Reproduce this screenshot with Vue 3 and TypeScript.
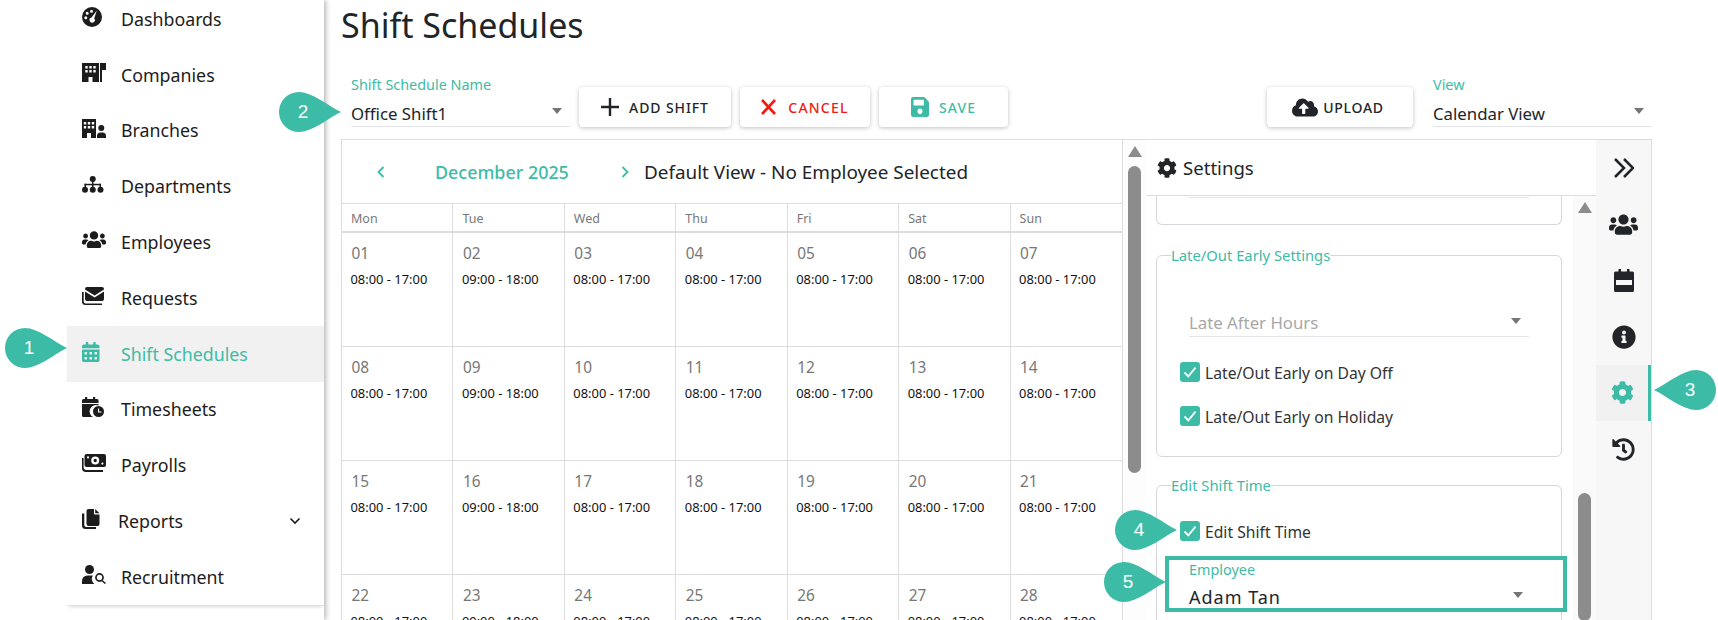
<script setup lang="ts">
interface Icon {
  vb: string
  w: number
  h: number
  paths: string[]
}

const dot = (cx: number, cy: number, r: number) =>
  `M${cx - r} ${cy}a${r} ${r} 0 1 0 ${2 * r} 0a${r} ${r} 0 1 0 ${-2 * r} 0z`
const box = (x: number, y: number, w: number, h: number) => `M${x} ${y}h${w}v${h}h${-w}z`

const usersPath = 'M96 224c35.3 0 64-28.7 64-64s-28.7-64-64-64-64 28.7-64 64 28.7 64 64 64zm448 0c35.3 0 64-28.7 64-64s-28.7-64-64-64-64 28.7-64 64 28.7 64 64 64zm32 32h-64c-17.6 0-33.5 7.1-45.1 18.6 40.3 22.1 68.9 62 75.1 109.4h66c17.7 0 32-14.3 32-32v-32c0-35.3-28.7-64-64-64zm-256 0c61.9 0 112-50.1 112-112S381.9 32 320 32 208 82.1 208 144s50.1 112 112 112zm76.8 32h-8.3c-20.8 10-43.9 16-68.5 16s-47.6-6-68.5-16h-8.3C179.6 288 128 339.6 128 403.2V432c0 26.5 21.5 48 48 48h288c26.5 0 48-21.5 48-48v-28.8c0-63.6-51.6-115.2-115.2-115.2zm-223.7-13.4C161.5 263.1 145.6 256 128 256H64c-35.3 0-64 28.7-64 64v32c0 17.7 14.3 32 32 32h65.9c6.3-47.4 34.9-87.3 75.2-109.4z'
const calendarAltPath = 'M0 464c0 26.5 21.5 48 48 48h352c26.5 0 48-21.5 48-48V192H0v272zm320-196c0-6.6 5.4-12 12-12h40c6.6 0 12 5.4 12 12v40c0 6.6-5.4 12-12 12h-40c-6.6 0-12-5.4-12-12v-40zm0 128c0-6.6 5.4-12 12-12h40c6.6 0 12 5.4 12 12v40c0 6.6-5.4 12-12 12h-40c-6.6 0-12-5.4-12-12v-40zM192 268c0-6.6 5.4-12 12-12h40c6.6 0 12 5.4 12 12v40c0 6.6-5.4 12-12 12h-40c-6.6 0-12-5.4-12-12v-40zm0 128c0-6.6 5.4-12 12-12h40c6.6 0 12 5.4 12 12v40c0 6.6-5.4 12-12 12h-40c-6.6 0-12-5.4-12-12v-40zM64 268c0-6.6 5.4-12 12-12h40c6.6 0 12 5.4 12 12v40c0 6.6-5.4 12-12 12H76c-6.6 0-12-5.4-12-12v-40zm0 128c0-6.6 5.4-12 12-12h40c6.6 0 12 5.4 12 12v40c0 6.6-5.4 12-12 12H76c-6.6 0-12-5.4-12-12v-40zM400 64h-48V16c0-8.8-7.2-16-16-16h-32c-8.8 0-16 7.2-16 16v48H160V16c0-8.8-7.2-16-16-16h-32c-8.8 0-16 7.2-16 16v48H48C21.5 64 0 85.5 0 112v48h448v-48c0-26.5-21.5-48-48-48z'
const cogPath = 'M487.4 315.7l-42.6-24.6c4.3-23.2 4.3-47 0-70.2l42.6-24.6c4.9-2.8 7.1-8.6 5.5-14-11.1-35.6-30-67.8-54.7-94.6-3.8-4.1-10-5.1-14.8-2.3L380.8 110c-17.9-15.4-38.5-27.3-60.8-35.1V25.8c0-5.6-3.9-10.5-9.4-11.7-36.7-8.2-74.3-7.8-109.2 0-5.5 1.2-9.4 6.1-9.4 11.7V75c-22.2 7.9-42.8 19.8-60.8 35.1L88.7 85.5c-4.9-2.8-11-1.9-14.8 2.3-24.7 26.7-43.6 58.9-54.7 94.6-1.7 5.4.6 11.2 5.5 14L67.3 221c-4.3 23.2-4.3 47 0 70.2l-42.6 24.6c-4.9 2.8-7.1 8.6-5.5 14 11.1 35.6 30 67.8 54.7 94.6 3.8 4.1 10 5.1 14.8 2.3l42.6-24.6c17.9 15.4 38.5 27.3 60.8 35.1v49.2c0 5.6 3.9 10.5 9.4 11.7 36.7 8.2 74.3 7.8 109.2 0 5.5-1.2 9.4-6.1 9.4-11.7v-49.2c22.2-7.9 42.8-19.8 60.8-35.1l42.6 24.6c4.9 2.8 11 1.9 14.8-2.3 24.7-26.7 43.6-58.9 54.7-94.6 1.5-5.5-.7-11.3-5.6-14.1zM256 336c-44.1 0-80-35.9-80-80s35.9-80 80-80 80 35.9 80 80-35.9 80-80 80z'
const savePath = 'M433.941 129.941l-83.882-83.882A48 48 0 0 0 316.118 32H48C21.49 32 0 53.49 0 80v352c0 26.51 21.49 48 48 48h352c26.51 0 48-21.49 48-48V163.882a48 48 0 0 0-14.059-33.941zM224 416c-35.346 0-64-28.654-64-64 0-35.346 28.654-64 64-64s64 28.654 64 64c0 35.346-28.654 64-64 64zm96-304.52V212c0 6.627-5.373 12-12 12H76c-6.627 0-12-5.373-12-12V108c0-6.627 5.373-12 12-12h228.52c3.183 0 6.235 1.264 8.485 3.515l3.48 3.48A11.996 11.996 0 0 1 320 111.48z'
const cloudPath = 'M537.6 226.6c4.1-10.7 6.4-22.4 6.4-34.6 0-53-43-96-96-96-19.7 0-38.1 6-53.3 16.2C367 64.2 315.3 32 256 32c-88.4 0-160 71.6-160 160 0 2.7.1 5.4.2 8.1C40.2 219.8 0 273.2 0 336c0 79.5 64.5 144 144 144h368c70.7 0 128-57.3 128-128 0-61.9-44-113.6-102.4-125.4zM393.4 288H328v112c0 8.8-7.2 16-16 16h-48c-8.8 0-16-7.2-16-16V288h-65.4c-14.3 0-21.4-17.2-11.3-27.3l105.4-105.4c6.2-6.2 16.4-6.2 22.6 0l105.4 105.4c10.1 10.1 2.9 27.3-11.3 27.3z'
const infoPath = 'M256 8C119.043 8 8 119.083 8 256c0 136.997 111.043 248 248 248s248-111.003 248-248C504 119.083 392.957 8 256 8zm0 110c23.196 0 42 18.804 42 42s-18.804 42-42 42-42-18.804-42-42 18.804-42 42-42zm56 254c0 6.627-5.373 12-12 12h-88c-6.627 0-12-5.373-12-12v-24c0-6.627 5.373-12 12-12h12v-64h-12c-6.627 0-12-5.373-12-12v-24c0-6.627 5.373-12 12-12h64c6.627 0 12 5.373 12 12v100h12c6.627 0 12 5.373 12 12v24z'
const historyPath = 'M504 255.531c.253 136.64-111.18 248.372-247.82 248.468-59.015.042-113.223-20.53-155.822-54.911-11.077-8.94-11.905-25.541-1.839-35.607l11.267-11.267c8.609-8.609 22.353-9.551 31.891-1.984C173.062 425.135 212.781 440 256 440c101.705 0 184-82.311 184-184 0-101.705-82.311-184-184-184-48.814 0-93.149 18.969-126.068 49.932l50.754 50.754c10.08 10.08 2.941 27.314-11.313 27.314H24c-8.837 0-16-7.163-16-16V38.627c0-14.254 17.234-21.393 27.314-11.314l49.372 49.372C129.209 31.084 189.552 8 256 8c136.81 0 247.747 110.78 248 247.531zm-180.912 78.784l9.823-12.63c8.138-10.463 6.253-25.542-4.21-33.679L288 256.349V152c0-13.255-10.745-24-24-24h-16c-13.255 0-24 10.745-24 24v135.651l65.409 50.874c10.463 8.137 25.541 6.253 33.679-4.21z'

const windows = (x: number) =>
  [3, 7].map((y) => [0, 4, 8].map((dx) => box(x + dx, y, 2.4, 2.4)).join('')).join('')

const navItems: { label: string; icon: Icon; active?: boolean; sub?: boolean }[] = [
  {
    label: 'Dashboards',
    icon: {
      vb: '0 0 20 20', w: 20, h: 20,
      paths: [dot(10, 10, 10) + dot(9.5, 4.2, 1.5) + dot(5.2, 6.2, 1.5) + dot(3.8, 10.8, 1.5) + 'M14.8 3.4L12.2 11.4a2.6 2.6 0 1 1-2.7-.9z'],
    },
  },
  {
    label: 'Companies',
    icon: {
      vb: '0 0 24 19', w: 24, h: 19,
      paths: [box(0, 0, 17, 19) + windows(3.3) + box(6.5, 14, 4, 5), box(18, 0, 2, 19), box(20, 0, 4, 7)],
    },
  },
  {
    label: 'Branches',
    icon: {
      vb: '0 0 24 19', w: 24, h: 19,
      paths: [box(0, 0, 14, 19) + windows(1.8) + box(5, 14, 4, 5), dot(19.3, 9, 3), 'M15 19v-2a3.5 3.5 0 0 1 3.5-3.5h2A3.5 3.5 0 0 1 24 17v2z'],
    },
  },
  {
    label: 'Departments',
    icon: {
      vb: '0 0 21.5 17', w: 21.5, h: 17,
      paths: [dot(10.75, 3, 3), box(10, 5, 1.5, 7), box(2.5, 7.8, 16.5, 1.5), box(2.5, 7.8, 1.5, 4), box(17.5, 7.8, 1.5, 4), dot(3, 13.8, 3), dot(10.75, 13.8, 3), dot(18.5, 13.8, 3)],
    },
  },
  { label: 'Employees', icon: { vb: '0 0 640 512', w: 24, h: 19.2, paths: [usersPath] } },
  {
    label: 'Requests',
    icon: {
      vb: '0 0 22 18', w: 22, h: 18,
      paths: [
        'M5 0h15a2 2 0 0 1 2 2v.6L12.6 8.4 3 2.6V2a2 2 0 0 1 2-2z',
        'M3 4.6l9.6 5.8L22 4.6V12a2 2 0 0 1-2 2H5a2 2 0 0 1-2-2z',
        'M0 5h1.7v9.6a1.9 1.9 0 0 0 1.9 1.9H20V18H3.5A3.5 3.5 0 0 1 0 14.5z',
      ],
    },
  },
  { label: 'Shift Schedules', icon: { vb: '0 0 448 512', w: 17.5, h: 20, paths: [calendarAltPath] }, active: true },
  {
    label: 'Timesheets',
    icon: {
      vb: '0 0 22 20', w: 22, h: 20,
      paths: [
        box(3, 0, 2.2, 3) + box(11, 0, 2.2, 3),
        'M1.5 2h13.5a1.5 1.5 0 0 1 1.5 1.5V6H0V3.5A1.5 1.5 0 0 1 1.5 2z',
        'M0 7h16.5v1.6a6.2 6.2 0 0 0-5.3 11.4H1.5A1.5 1.5 0 0 1 0 18.5z',
        dot(16.5, 14.5, 5.5) + 'M16 11.5h1.1v3h2.4v1.1H16z',
      ],
    },
  },
  {
    label: 'Payrolls',
    icon: {
      vb: '0 0 24 18', w: 24, h: 18,
      paths: [
        'M4.5 0h17.5a2 2 0 0 1 2 2v9a2 2 0 0 1-2 2H4.5a2 2 0 0 1-2-2V2a2 2 0 0 1 2-2z' + dot(13.2, 6.5, 4) + dot(6, 3.4, 1.1) + dot(20.4, 9.6, 1.1),
        dot(13.2, 6.5, 1.7),
        'M0 4h1.6v9.5a2.4 2.4 0 0 0 2.4 2.4h17V18H4a4 4 0 0 1-4-4z',
      ],
    },
  },
  {
    label: 'Reports',
    sub: true,
    icon: {
      vb: '0 0 17.5 20', w: 17.5, h: 20,
      paths: [
        'M6.5 0H12v4.6a.9.9 0 0 0 .9.9h4.6V15a2 2 0 0 1-2 2h-9a2 2 0 0 1-2-2V2a2 2 0 0 1 2-2z',
        'M13.2 0l4.3 4.3h-4.3z',
        'M0 4.5h2.3V16a2 2 0 0 0 2 2H14v2H3.5A3.5 3.5 0 0 1 0 16.5z',
      ],
    },
  },
  {
    label: 'Recruitment',
    icon: {
      vb: '0 0 24 19', w: 24, h: 19,
      paths: [
        dot(7.5, 4.5, 4.5),
        'M0 19v-3a5.5 5.5 0 0 1 5.5-5.5h4.4a5.5 5.5 0 0 1 1 .1 6.2 6.2 0 0 0 1.4 8.4z',
        dot(17.5, 12.5, 4.4) + dot(17.5, 12.5, 2.7),
        'M20.3 15.1l3.7 3-1.1 .9-3.7-3z',
      ],
    },
  },
]

const railItems: { icon: Icon; active?: boolean }[] = [
  { icon: { vb: '0 0 20 20', w: 20, h: 20, paths: [] } },
  { icon: { vb: '0 0 640 512', w: 29, h: 23.2, paths: [usersPath] } },
  {
    icon: {
      vb: '0 0 20 23', w: 20, h: 23,
      paths: [box(4.5, 0, 2.5, 4) + box(13, 0, 2.5, 4), 'M1.5 2.5h17a1.5 1.5 0 0 1 1.5 1.5v17.5a1.5 1.5 0 0 1-1.5 1.5h-17A1.5 1.5 0 0 1 0 21.5V4a1.5 1.5 0 0 1 1.5-1.5z' + box(2, 11, 16, 5)],
    },
  },
  { icon: { vb: '0 0 512 512', w: 24, h: 24, paths: [infoPath] } },
  { icon: { vb: '0 0 512 512', w: 23, h: 23, paths: [cogPath] }, active: true },
  { icon: { vb: '0 0 512 512', w: 23, h: 23, paths: [historyPath] } },
]

const weekdays = ['Mon', 'Tue', 'Wed', 'Thu', 'Fri', 'Sat', 'Sun']
const days = Array.from({ length: 28 }, (_, i) => ({
  num: String(i + 1).padStart(2, '0'),
  time: i % 7 === 1 ? '09:00 - 18:00' : '08:00 - 17:00',
}))

const bubbles = [
  { n: 1, x: 5, y: 328, flip: false },
  { n: 2, x: 279, y: 92, flip: false },
  { n: 3, x: 1654, y: 370, flip: true },
  { n: 4, x: 1115, y: 510, flip: false },
  { n: 5, x: 1104, y: 562, flip: false },
]
</script>

<template>
  <div class="page">
    <aside class="sidebar">
      <nav class="nav">
        <a v-for="item in navItems" :key="item.label" class="nav-item" :class="{ active: item.active, sub: item.sub }">
          <span class="nav-icon">
            <svg :width="item.icon.w" :height="item.icon.h" :viewBox="item.icon.vb" fill="currentColor">
              <path v-for="(d, i) in item.icon.paths" :key="i" :d="d" fill-rule="evenodd" />
            </svg>
          </span>
          <span class="nav-label">{{ item.label }}</span>
          <svg v-if="item.sub" class="nav-chevron" width="12" height="8" viewBox="0 0 12 8" fill="none" stroke="currentColor" stroke-width="1.6"><path d="M1.5 1.5L6 6l4.5-4.5" /></svg>
        </a>
      </nav>
    </aside>

    <main class="main">
      <h1 class="title">Shift Schedules</h1>

      <div class="toolbar">
        <div class="select schedule-select">
          <label>Shift Schedule Name</label>
          <div class="select-value">Office Shift1<i class="caret"></i></div>
        </div>
        <button class="btn add-btn">
          <svg width="18" height="18" viewBox="0 0 18 18" fill="none" stroke="currentColor" stroke-width="2.4"><path d="M9 0v18M0 9h18" /></svg>
          ADD SHIFT
        </button>
        <button class="btn cancel-btn">
          <svg width="15" height="16" viewBox="0 0 15 16" fill="none" stroke="currentColor" stroke-width="2.6"><path d="M1 1l13 14M14 1L1 15" /></svg>
          CANCEL
        </button>
        <button class="btn save-btn">
          <svg width="18" height="20" viewBox="0 32 448 448" preserveAspectRatio="none" fill="currentColor"><path :d="savePath" /></svg>
          SAVE
        </button>
        <button class="btn upload-btn">
          <svg width="26" height="21" viewBox="0 0 640 512" fill="currentColor"><path :d="cloudPath" /></svg>
          UPLOAD
        </button>
        <div class="select view-select">
          <label>View</label>
          <div class="select-value">Calendar View<i class="caret"></i></div>
        </div>
      </div>

      <div class="workspace">
        <section class="calendar">
          <header class="cal-head">
            <svg class="cal-arrow prev" width="8" height="12" viewBox="0 0 8 12" fill="none" stroke="currentColor" stroke-width="1.8"><path d="M6.5 1L1.5 6l5 5" /></svg>
            <span class="cal-month">December 2025</span>
            <svg class="cal-arrow next" width="8" height="12" viewBox="0 0 8 12" fill="none" stroke="currentColor" stroke-width="1.8"><path d="M1.5 1l5 5-5 5" /></svg>
            <span class="cal-view">Default View - No Employee Selected</span>
          </header>
          <div class="cal-weekdays">
            <div v-for="w in weekdays" :key="w" class="weekday">{{ w }}</div>
          </div>
          <div class="cal-grid">
            <div v-for="d in days" :key="d.num" class="day">
              <div class="day-num">{{ d.num }}</div>
              <div class="day-time">{{ d.time }}</div>
            </div>
          </div>
        </section>

        <div class="scroll-track cal-track">
          <i class="scroll-up"></i>
          <i class="scroll-thumb"></i>
        </div>

        <section class="settings">
          <div class="settings-col">
            <header class="settings-head">
              <svg width="20" height="20" viewBox="0 0 512 512" fill="currentColor"><path :d="cogPath" /></svg>
              Settings
            </header>
            <div class="settings-body">
              <div class="settings-scroll">
                <fieldset class="group group-cut">
                  <div class="cut-line"></div>
                </fieldset>

                <fieldset class="group group-late">
                  <legend>Late/Out Early Settings</legend>
                  <div class="select late-select">
                    <div class="select-value muted">Late After Hours<i class="caret"></i></div>
                  </div>
                  <div class="check-row">
                    <span class="check"><svg width="14" height="12" viewBox="0 0 14 12" fill="none" stroke="#fff" stroke-width="1.8"><path d="M1.5 6.5l3.8 3.8 7.2-8.6" /></svg></span>
                    <span class="check-text">Late/Out Early on Day Off</span>
                  </div>
                  <div class="check-row">
                    <span class="check"><svg width="14" height="12" viewBox="0 0 14 12" fill="none" stroke="#fff" stroke-width="1.8"><path d="M1.5 6.5l3.8 3.8 7.2-8.6" /></svg></span>
                    <span class="check-text">Late/Out Early on Holiday</span>
                  </div>
                </fieldset>

                <fieldset class="group group-edit">
                  <legend>Edit Shift Time</legend>
                  <div class="check-row">
                    <span class="check"><svg width="14" height="12" viewBox="0 0 14 12" fill="none" stroke="#fff" stroke-width="1.8"><path d="M1.5 6.5l3.8 3.8 7.2-8.6" /></svg></span>
                    <span class="check-text">Edit Shift Time</span>
                  </div>
                  <div class="highlight">
                    <label>Employee</label>
                    <div class="select-value">Adam Tan<i class="caret"></i></div>
                  </div>
                </fieldset>
              </div>
              <div class="scroll-track inner-track">
                <i class="scroll-up"></i>
                <i class="scroll-thumb"></i>
              </div>
            </div>
          </div>

          <div class="rail">
            <div v-for="(r, i) in railItems" :key="i" class="rail-item" :class="{ active: r.active }">
              <svg v-if="i === 0" width="20" height="20" viewBox="0 0 20 20" fill="none" stroke="currentColor" stroke-width="2.5"><path d="M1 1l9 9-9 9M10 1l9 9-9 9" /></svg>
              <svg v-else :width="r.icon.w" :height="r.icon.h" :viewBox="r.icon.vb" fill="currentColor">
                <path v-for="(d, j) in r.icon.paths" :key="j" :d="d" fill-rule="evenodd" />
              </svg>
            </div>
          </div>
        </section>
      </div>
    </main>

    <div
      v-for="b in bubbles"
      :key="b.n"
      class="bubble"
      :style="{ left: b.x + 'px', top: b.y + 'px' }"
    >
      <svg width="62" height="40" viewBox="0 0 62 40" :class="{ flip: b.flip }">
        <path d="M20 0C33 0 48 13 62 20C48 27 33 40 20 40A20 20 0 0 1 20 0Z" fill="#3cbca6" />
      </svg>
      <span class="bubble-num" :class="{ flip: b.flip }">{{ b.n }}</span>
    </div>
  </div>
</template>

<style>
html, body { margin: 0; overflow: hidden; background: #fff; }
</style>

<style scoped>
.page {
  position: relative;
  display: flex;
  width: 1718px;
  height: 620px;
  overflow: hidden;
  font-family: "Noto Sans", "Liberation Sans", sans-serif;
  color: #212529;
}
.sidebar {
  flex: 0 0 324px;
  box-shadow: 2px 0 5px rgba(0, 0, 0, 0.28);
  position: relative;
  z-index: 1;
  background: #fff;
}
.nav {
  margin: -9px 0 0 67px;
  border-bottom: 1px solid #e2e2e2;
  box-shadow: 0 3px 3px -2px rgba(0, 0, 0, 0.15);
}
.nav-item {
  display: flex;
  align-items: center;
  height: 55.8px;
  padding-left: 15px;
  font-size: 17.8px;
  color: #1c1c1c;
}
.nav-item.active { background: #f1f1f1; color: #3cbca6; }
.nav-icon {
  flex: 0 0 24px;
  display: flex;
  align-items: center;
  margin-right: 15px;
}
.nav-icon svg { margin-top: -4px; }
.nav-item.sub .nav-icon { margin-right: 12px; }
.nav-label { white-space: nowrap; }
.nav-chevron { margin-left: auto; margin-right: 23px; }

.main {
  flex: 1;
  min-width: 0;
  padding: 0 66px 0 17px;
}
.title {
  margin: 0;
  height: 87px;
  font-size: 34px;
  font-weight: 400;
  line-height: 50px;
  color: #212529;
}
.toolbar {
  display: flex;
  align-items: flex-end;
  height: 40px;
  padding-left: 10px;
  gap: 9px;
}
.select { position: relative; }
.select label, .highlight label {
  display: block;
  font-size: 14.4px;
  line-height: 18px;
  color: #3cbca6;
}
.select label { margin-bottom: 8px; }
.select-value {
  position: relative;
  font-size: 16.8px;
  line-height: 24px;
  color: #212529;
  border-bottom: 1px solid #e4e4ec;
}
.select-value.muted { color: #a8a8a8; line-height: 26px; }
.caret {
  position: absolute;
  right: 8px;
  top: 8px;
  width: 0;
  height: 0;
  border-left: 5.5px solid transparent;
  border-right: 5.5px solid transparent;
  border-top: 6px solid #757575;
}
.schedule-select { width: 219px; }
.view-select { width: 219px; margin-left: 11px; }
.view-select .caret, .schedule-select .caret { top: 6px; }
.btn {
  display: flex;
  align-items: center;
  justify-content: center;
  height: 40px;
  padding: 0;
  border: 0;
  border-radius: 4px;
  background: #fff;
  box-shadow: 0 1px 4px rgba(0, 0, 0, 0.25);
  font-family: inherit;
  font-size: 14px;
  font-weight: 500;
  letter-spacing: 0.9px;
}
.add-btn { width: 152px; gap: 10px; color: #212529; }
.cancel-btn { width: 130px; gap: 12px; color: #f2190f; letter-spacing: 1.2px; }
.save-btn { width: 129px; gap: 10px; color: #3cbca6; letter-spacing: 1.1px; }
.upload-btn { width: 146px; gap: 5px; padding-right: 4px; letter-spacing: 0.7px; color: #212529; margin-left: auto; }

.workspace {
  display: flex;
  height: 481px;
  margin-top: 12px;
  border-top: 1px solid #ddd;
}
.calendar {
  flex: 0 0 782px;
  border-left: 1px solid #ddd;
  border-right: 1px solid #ddd;
  box-sizing: border-box;
}
.cal-head {
  display: flex;
  align-items: center;
  height: 63px;
  border-bottom: 1px solid #ddd;
  font-size: 18.9px;
}
.cal-arrow { color: #3cbca6; }
.cal-arrow.prev { margin-left: 35px; }
.cal-month { margin-left: 50px; width: 132px; color: #3cbca6; font-weight: 500; white-space: nowrap; font-size: 17.9px; }
.cal-arrow.next { margin-left: 54px; }
.cal-view { margin-left: 15px; white-space: nowrap; }
.cal-weekdays, .cal-grid {
  display: grid;
  grid-template-columns: repeat(7, 1fr);
}
.cal-weekdays { border-bottom: 2px solid #ddd; }
.weekday {
  height: 27px;
  line-height: 29px;
  padding-left: 9px;
  font-size: 12.5px;
  color: #777;
  border-right: 1px solid #ddd;
}
.weekday:last-child, .day:nth-child(7n) { border-right: 0; }
.day {
  height: 114px;
  box-sizing: border-box;
  padding: 10px 0 0 8.5px;
  border-right: 1px solid #ddd;
  border-bottom: 1px solid #ddd;
}
.day-num { font-size: 15.4px; line-height: 22px; color: #777; padding-left: 1px; }
.day-time { margin-top: 4.5px; font-size: 12.9px; line-height: 18px; color: #111; white-space: nowrap; }

.scroll-track {
  display: flex;
  flex-direction: column;
  align-items: center;
  flex: 0 0 23px;
  background: #fdfdfd;
}
.scroll-up {
  width: 0;
  height: 0;
  border-left: 7px solid transparent;
  border-right: 7px solid transparent;
  border-bottom: 11px solid #8c8c8c;
  margin-top: 6px;
}
.scroll-thumb {
  width: 13px;
  background: #8c8c8c;
  border-radius: 6.5px;
}
.cal-track .scroll-thumb { height: 307px; margin-top: 9px; }
.inner-track { background: #fafafa; }
.inner-track .scroll-thumb { height: 300px; margin-top: 280px; }

.settings {
  flex: 1;
  display: flex;
  min-width: 0;
}
.settings-col {
  flex: 1;
  min-width: 0;
  display: flex;
  flex-direction: column;
}
.settings-head {
  display: flex;
  align-items: center;
  gap: 6px;
  flex: 0 0 55px;
  padding-left: 11px;
  border-bottom: 1px solid #ddd;
  font-size: 18.6px;
}
.settings-body {
  flex: 1;
  display: flex;
  min-height: 0;
}
.settings-scroll {
  flex: 1;
  min-width: 0;
  overflow: hidden;
  padding: 0 11px 0 10px;
}
.group {
  margin: 0;
  padding: 0;
  border: 1px solid #d5d5dc;
  border-radius: 6px;
  min-width: 0;
}
.group legend {
  margin-left: 14px;
  padding: 0;
  font-size: 14.8px;
  line-height: 20px;
  color: #3cbca6;
}
.group-cut {
  height: 30px;
  margin-top: -1px;
  border-top: 0;
  border-top-left-radius: 0;
  border-top-right-radius: 0;
  box-sizing: border-box;
}
.cut-line {
  height: 1px;
  margin: 2px 32px 0;
  background: #e4e4ec;
}
.group-late { margin-top: 20px; padding-bottom: 30px; }
.group-edit { margin-top: 18px; height: 300px; box-sizing: border-box; }
.late-select { margin: 45px 32px 0; }
.check-row {
  display: flex;
  align-items: center;
  gap: 5px;
  height: 20px;
  margin: 24px 0 0 23px;
  font-size: 15.7px;
  color: #333;
  white-space: nowrap;
}
.late-select + .check-row { margin-top: 25px; }
.check-text { position: relative; top: 1px; }
.check {
  display: flex;
  align-items: center;
  justify-content: center;
  width: 20px;
  height: 20px;
  border-radius: 3px;
  background: #3cbca6;
}
.group-edit .check-row { margin-top: 26px; }
.highlight {
  position: relative;
  box-sizing: border-box;
  width: 402px;
  height: 56px;
  margin: 15px 0 0 8px;
  padding: 1px 32px 0 20px;
  border: 4px solid #3cbca6;
  background: #fff;
}
.highlight .select-value {
  border: 0;
  margin-top: 7px;
  font-size: 18px;
  letter-spacing: 1px;
  line-height: 22px;
}
.highlight .caret { right: 8px; top: 6px; }

.rail {
  flex: 0 0 56px;
  box-sizing: border-box;
  background: #f7f7f7;
  border-right: 1px solid #ddd;
}
.rail-item {
  display: flex;
  align-items: center;
  justify-content: center;
  height: 56.2px;
  color: #212529;
  box-sizing: border-box;
}
.rail-item.active {
  background: #f1f1f1;
  color: #3cbca6;
  border-right: 3px solid #3cbca6;
}

.bubble {
  position: absolute;
  width: 62px;
  height: 40px;
  z-index: 2;
}
.bubble svg { display: block; }
.bubble svg.flip { transform: scaleX(-1); }
.bubble-num {
  position: absolute;
  left: 14px;
  top: 0;
  width: 20px;
  text-align: center;
  font-family: "Liberation Sans", sans-serif;
  font-size: 19px;
  line-height: 40px;
  color: #fff;
}
.bubble-num.flip { left: 26px; }
</style>
